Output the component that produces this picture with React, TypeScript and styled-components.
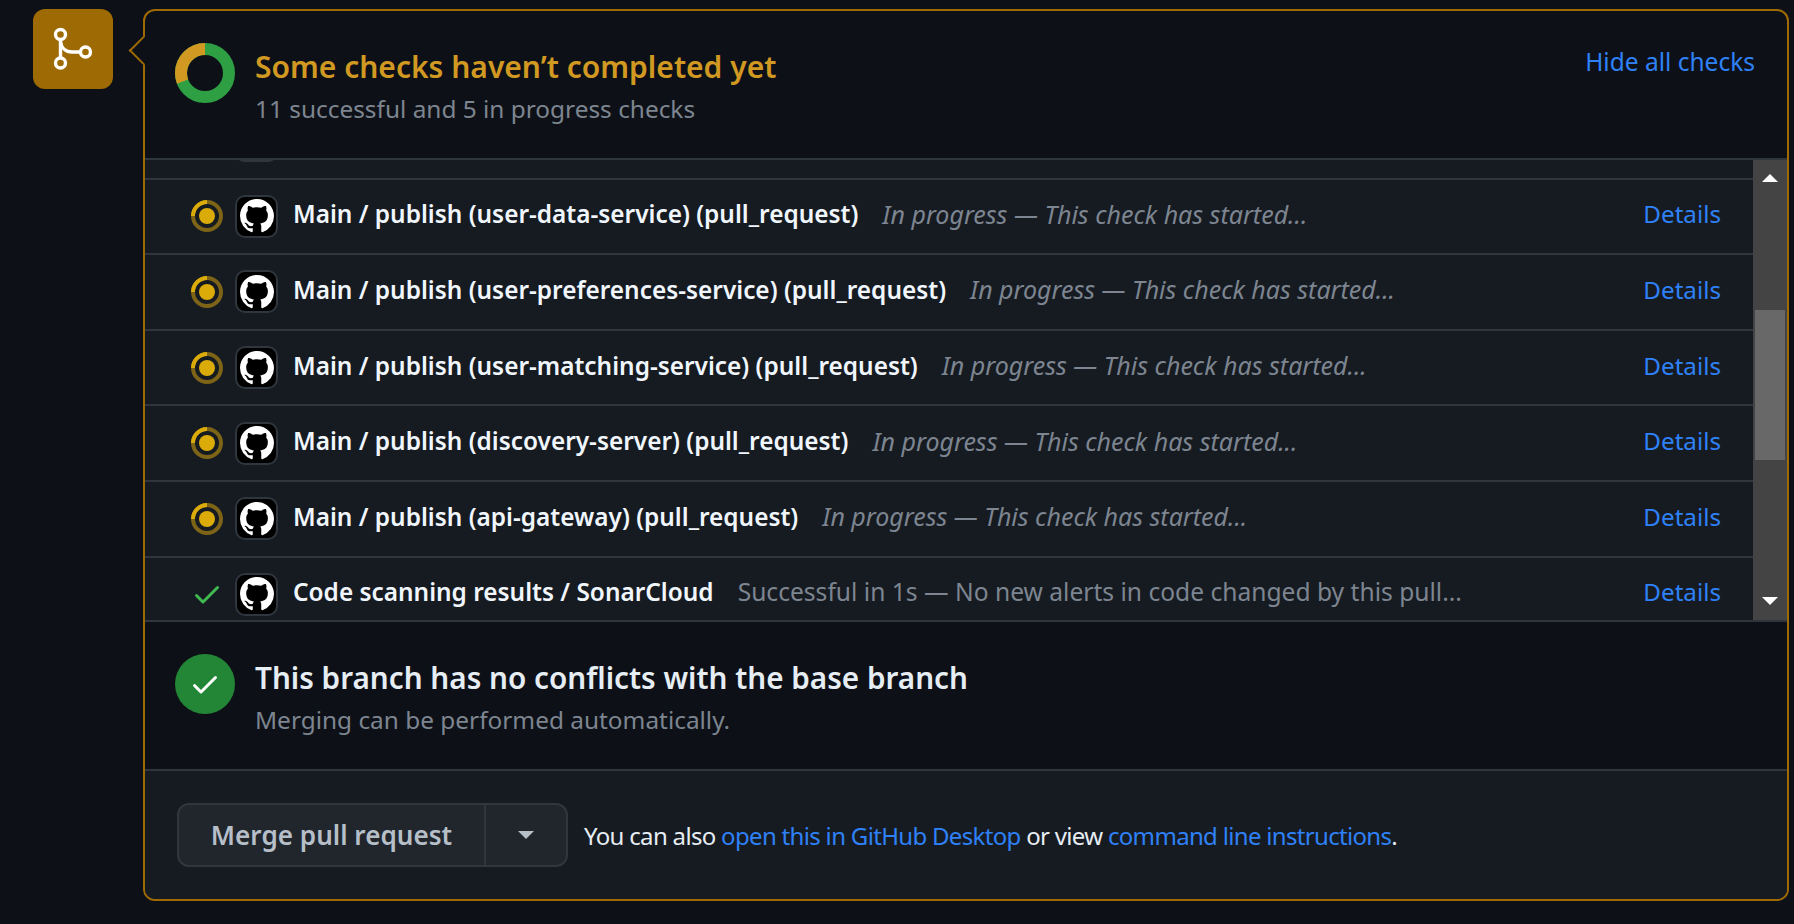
import React from "react";
import styled, { createGlobalStyle } from "styled-components";

const GITHUB_MARK =
  "M8 0c4.42 0 8 3.58 8 8a8.013 8.013 0 0 1-5.45 7.59c-.4.08-.55-.17-.55-.38 0-.27.01-1.13.01-2.2 0-.75-.25-1.23-.54-1.48 1.78-.2 3.65-.88 3.65-3.95 0-.88-.31-1.59-.82-2.15.08-.2.36-1.02-.08-2.12 0 0-.67-.22-2.2.82-.64-.18-1.32-.27-2-.27-.68 0-1.36.09-2 .27-1.53-1.03-2.2-.82-2.2-.82-.44 1.1-.16 1.92-.08 2.12-.51.56-.82 1.28-.82 2.15 0 3.06 1.86 3.75 3.64 3.95-.23.2-.44.55-.51 1.07-.46.21-1.61.55-2.33-.66-.15-.24-.6-.83-1.23-.82-.67.01-.27.38.01.53.34.19.73.9.82 1.13.16.45.68 1.31 2.69.94 0 .67.01 1.3.01 1.49 0 .21-.15.45-.55.38A7.995 7.995 0 0 1 0 8c0-4.42 3.58-8 8-8Z";
const CHECK =
  "M13.78 4.22a.75.75 0 0 1 0 1.06l-7.25 7.25a.75.75 0 0 1-1.06 0L2.22 9.28a.751.751 0 0 1 .018-1.042.751.751 0 0 1 1.042-.018L6 10.94l6.72-6.72a.75.75 0 0 1 1.06 0Z";

interface Check {
  name: string;
  description: string;
  done?: boolean;
}

const IN_PROGRESS = "In progress — This check has started...";

// first row is scrolled out of view, only the bottom of its avatar shows
const checks: Check[] = [
  { name: "", description: "" },
  { name: "Main / publish (user-data-service) (pull_request)", description: IN_PROGRESS },
  { name: "Main / publish (user-preferences-service) (pull_request)", description: IN_PROGRESS },
  { name: "Main / publish (user-matching-service) (pull_request)", description: IN_PROGRESS },
  { name: "Main / publish (discovery-server) (pull_request)", description: IN_PROGRESS },
  { name: "Main / publish (api-gateway) (pull_request)", description: IN_PROGRESS },
  {
    name: "Code scanning results / SonarCloud",
    description: "Successful in 1s — No new alerts in code changed by this pull...",
    done: true,
  },
];

const App = () => {
  return (
    <Page>
      <GlobalStyle />
      <MergeBadge>
        <svg width="48" height="48" viewBox="0 0 48 48" fill="none" stroke="#fff" strokeWidth="3.4">
          <circle cx="11.5" cy="9.5" r="5" />
          <circle cx="11.5" cy="38" r="5" />
          <circle cx="36.5" cy="27" r="5" />
          <path d="M11.5 14.5V33" />
          <path d="M11.5 17C12.5 23 17 27 23 27H31.5" />
        </svg>
      </MergeBadge>
      <Panel>
        <StatusSection>
          <svg width="60" height="60" viewBox="0 0 60 60">
            <g fill="none" strokeWidth="12" transform="rotate(-90 30 30)">
              <circle cx="30" cy="30" r="24" stroke="#2ea043" />
              <circle
                cx="30"
                cy="30"
                r="24"
                stroke="#d29922"
                strokeDasharray="47.1 150.8"
                strokeDashoffset="-103.7"
              />
            </g>
          </svg>
          <StatusText>
            <StatusTitle $color="#d29922">Some checks haven’t completed yet</StatusTitle>
            <StatusSub>11 successful and 5 in progress checks</StatusSub>
          </StatusText>
          <HideLink>Hide all checks</HideLink>
        </StatusSection>

        <ChecksBox>
          <ChecksViewport>
            <ChecksList>
              {checks.map((check, index) => (
                <CheckRow key={index}>
                  <StateIcon>
                    {check.done ? (
                      <svg width="32" height="32" viewBox="0 0 16 16" fill="#3fb950">
                        <path d={CHECK} />
                      </svg>
                    ) : (
                      <svg width="32" height="32" viewBox="0 0 32 32" fill="none">
                        <circle cx="16" cy="16" r="14" stroke="#7d6417" strokeWidth="4" />
                        <path d="M2 16A14 14 0 0 1 16 2" stroke="#dbab0a" strokeWidth="4" />
                        <circle cx="16" cy="16" r="8" fill="#dbab0a" />
                      </svg>
                    )}
                  </StateIcon>
                  <Avatar>
                    <svg width="34" height="34" viewBox="0 0 16 16" fill="#fff">
                      <path d={GITHUB_MARK} />
                    </svg>
                  </Avatar>
                  {check.name && (
                    <>
                      <CheckName>{check.name}</CheckName>
                      <CheckDescription $done={check.done}>{check.description}</CheckDescription>
                      <DetailsLink>Details</DetailsLink>
                    </>
                  )}
                </CheckRow>
              ))}
            </ChecksList>
          </ChecksViewport>
          <ScrollTrack>
            <ScrollArrow $dir="up" />
            <ScrollThumb />
            <ScrollArrow $dir="down" />
          </ScrollTrack>
        </ChecksBox>

        <StatusSection>
          <GreenCircle>
            <svg width="32" height="32" viewBox="0 0 16 16" fill="#fff">
              <path d={CHECK} />
            </svg>
          </GreenCircle>
          <StatusText>
            <StatusTitle $color="#e6edf3" $small>
              This branch has no conflicts with the base branch
            </StatusTitle>
            <StatusSub>Merging can be performed automatically.</StatusSub>
          </StatusText>
        </StatusSection>

        <MergeFooter>
          <ButtonGroup>
            <MergeButton>Merge pull request</MergeButton>
            <CaretButton>
              <Caret />
            </CaretButton>
          </ButtonGroup>
          <FooterNote>
            You can also <NoteLink>open this in GitHub Desktop</NoteLink> or view{" "}
            <NoteLink>command line instructions</NoteLink>.
          </FooterNote>
        </MergeFooter>
      </Panel>
    </Page>
  );
};

export default App;

const GlobalStyle = createGlobalStyle`
  html, body {
    margin: 0;
    background: #0d1117;
    overflow: hidden;
  }
  * {
    box-sizing: border-box;
  }
`;

const Page = styled.div`
  display: flex;
  align-items: flex-start;
  gap: 30px;
  padding: 9px 0 0 33px;
  height: 924px;
  background: #0d1117;
  font-family: "Noto Sans", "Open Sans", sans-serif;
  font-size: 24px;
  color: #e6edf3;
`;

const MergeBadge = styled.div`
  width: 80px;
  height: 80px;
  flex: none;
  display: flex;
  align-items: center;
  justify-content: center;
  background: #9e6a03;
  border-radius: 12px;
`;

const Panel = styled.div`
  position: relative;
  width: 1646px;
  height: 892px;
  flex: none;
  border: 2px solid #9e6a03;
  border-radius: 12px;
  background: #0d1117;

  &::before {
    content: "";
    position: absolute;
    left: -12px;
    top: 29px;
    width: 19px;
    height: 19px;
    background: #0d1117;
    border-left: 2px solid #9e6a03;
    border-bottom: 2px solid #9e6a03;
    transform: rotate(45deg);
  }
`;

const StatusSection = styled.div`
  position: relative;
  display: flex;
  align-items: flex-start;
  gap: 20px;
  height: 147px;
  padding: 32px 32px 0 30px;
`;

const StatusText = styled.div`
  flex: 1;
  padding-top: 4px;
`;

const StatusTitle = styled.div<{ $color: string; $small?: boolean }>`
  font-size: ${({ $small }) => ($small ? "29.7px" : "30px")};
  line-height: 40px;
  font-weight: 600;
  color: ${({ $color }) => $color};
  white-space: nowrap;
`;

const StatusSub = styled.div`
  font-size: 24.4px;
  line-height: 44px;
  color: #7d8590;
  white-space: nowrap;
`;

const HideLink = styled.a`
  font-size: 24.5px;
  line-height: 38px;
  color: #2f81f7;
`;

const ChecksBox = styled.div`
  display: flex;
  height: 464px;
  background: #161b22;
  border-top: 2px solid #30363d;
  border-bottom: 2px solid #30363d;
`;

const ChecksViewport = styled.div`
  flex: 1;
  min-width: 0;
  overflow: hidden;
`;

const ChecksList = styled.div`
  margin-top: -56px;
`;

const CheckRow = styled.div`
  display: flex;
  align-items: center;
  height: 75.6px;
  padding: 0 32px 0 46px;
  border-bottom: 2px solid #30363d;
  white-space: nowrap;
`;

const StateIcon = styled.div`
  width: 32px;
  height: 32px;
  flex: none;
  margin-right: 12px;
`;

const Avatar = styled.div`
  width: 43px;
  height: 43px;
  flex: none;
  display: flex;
  align-items: center;
  justify-content: center;
  margin-right: 15px;
  background: #000;
  border: 2px solid #30363d;
  border-radius: 10px;
`;

const CheckName = styled.span`
  padding-bottom: 5px;
  font-size: 24.4px;
  font-weight: 600;
  color: #f0f6fc;
`;

const CheckDescription = styled.span<{ $done?: boolean }>`
  flex: 1;
  margin-left: 24px;
  padding-bottom: 5px;
  font-size: ${({ $done }) => ($done ? "24.6px" : "25px")};
  font-style: ${({ $done }) => ($done ? "normal" : "italic")};
  color: #7d8590;
`;

const DetailsLink = styled.a`
  padding-bottom: 5px;
  font-size: 24.2px;
  color: #2f81f7;
`;

const ScrollTrack = styled.div`
  width: 34px;
  flex: none;
  display: flex;
  flex-direction: column;
  align-items: center;
  padding: 14px 0 15px;
  background: #444;
`;

const ScrollArrow = styled.div<{ $dir: "up" | "down" }>`
  width: 0;
  height: 0;
  border-left: 8px solid transparent;
  border-right: 8px solid transparent;
  ${({ $dir }) =>
    $dir === "up" ? "border-bottom: 8px solid #fff;" : "margin-top: auto; border-top: 8px solid #fff;"}
`;

const ScrollThumb = styled.div`
  width: 30px;
  height: 150px;
  margin-top: 128px;
  background: #686868;
`;

const GreenCircle = styled.div`
  width: 60px;
  height: 60px;
  flex: none;
  display: flex;
  align-items: center;
  justify-content: center;
  background: #238636;
  border-radius: 50%;
`;

const MergeFooter = styled.div`
  display: flex;
  align-items: flex-start;
  gap: 16px;
  height: 130px;
  padding: 32px 0 0 32px;
  background: #161b22;
  border-top: 2px solid #30363d;
  border-radius: 0 0 10px 10px;
`;

const ButtonGroup = styled.div`
  display: flex;
  height: 64px;
  border: 2px solid #30363d;
  border-radius: 12px;
  background: #21262d;
`;

const MergeButton = styled.div`
  width: 307px;
  display: flex;
  align-items: center;
  justify-content: center;
  font-size: 26.1px;
  font-weight: 600;
  color: #b6bfc8;
  border-right: 2px solid #30363d;
`;

const CaretButton = styled.div`
  width: 80px;
  display: flex;
  align-items: center;
  justify-content: center;
`;

const Caret = styled.div`
  width: 0;
  height: 0;
  border-left: 8px solid transparent;
  border-right: 8px solid transparent;
  border-top: 8px solid #b6bfc8;
`;

const FooterNote = styled.div`
  padding-top: 1px;
  font-size: 24px;
  line-height: 64px;
  letter-spacing: -0.68px;
  color: #e6edf3;
  white-space: nowrap;
`;

const NoteLink = styled.a`
  color: #2f81f7;
`;
